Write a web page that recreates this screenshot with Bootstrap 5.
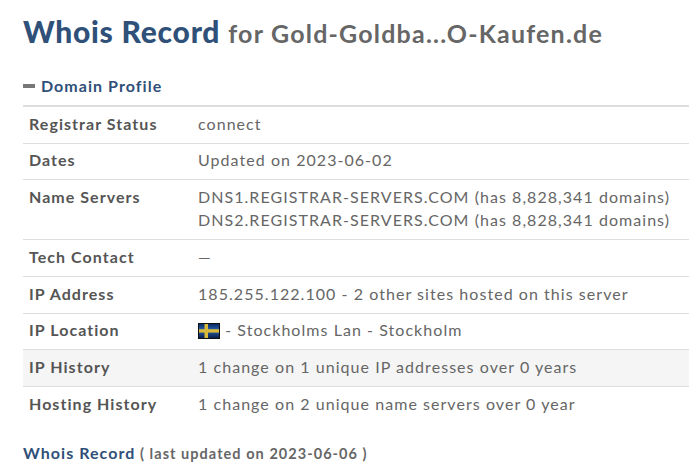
<!DOCTYPE html>
<html><head><meta charset="utf-8">
<link href="https://cdn.jsdelivr.net/npm/bootstrap@5.3.0/dist/css/bootstrap.min.css" rel="stylesheet">
<style>
html,body{background:#fff;overflow:hidden}
body{font-family:Lato,sans-serif;color:#666;padding:11px 0 0 23px;letter-spacing:1.05px;font-size:16px}
.ttl{font-size:30px;line-height:40px;font-weight:700;margin:0;letter-spacing:.75px;color:#666}
.ttl b{color:#2f5078}
.ttl span{font-size:25px;letter-spacing:1.2px}
.sect{margin-top:19px;color:#2f5078;font-weight:700;line-height:28px;gap:6px}
.dash{width:12px;height:4px;background:#777;display:block}
.infotab{width:666px;margin:5px 0 0;border-top:2px solid #ddd}
.infotab td{padding:4.6px 6px 7.92px;border-bottom:1px solid #ddd;line-height:23.2px;vertical-align:top;color:#666;box-shadow:none}
.infotab td:first-child{width:169px;font-weight:700;color:#555}
.infotab tr.shade td{background:#f5f5f5}
.infotab tr:last-child td{border-bottom:0}
.foot{margin-top:18px;font-weight:700;line-height:24px;font-size:14.5px}
.foot a{color:#2f5078;text-decoration:none;font-size:16px}
.foot span{color:#666}
.flag{vertical-align:-3px}
</style></head><body>
<h1 class="ttl"><b>Whois Record</b> <span>for Gold-Goldba...O-Kaufen.de</span></h1>
<div class="sect d-flex align-items-center"><i class="dash"></i>Domain Profile</div>
<table class="infotab table mb-0">
<tr><td>Registrar Status</td><td>connect</td></tr>
<tr><td>Dates</td><td>Updated on 2023-06-02</td></tr>
<tr><td>Name Servers</td><td>DNS1.REGISTRAR-SERVERS.COM (has 8,828,341 domains)<br>DNS2.REGISTRAR-SERVERS.COM (has 8,828,341 domains)</td></tr>
<tr><td>Tech Contact</td><td>—</td></tr>
<tr><td>IP Address</td><td>185.255.122.100 - 2 other sites hosted on this server</td></tr>
<tr><td>IP Location</td><td><svg class="flag" width="22" height="16" viewBox="0 0 22 16"><defs><linearGradient id="g" x1="0" y1="0" x2="0" y2="1"><stop offset="0" stop-color="#0a2c66"/><stop offset=".45" stop-color="#2e62b0"/><stop offset="1" stop-color="#071e4a"/></linearGradient></defs><rect width="22" height="16" fill="#111"/><rect x="1" y="1" width="20" height="14" fill="url(#g)"/><rect x="6.5" y="1" width="3.5" height="14" fill="#d8b93c"/><rect x="1" y="6.2" width="20" height="3.4" fill="#d8b93c"/></svg> - Stockholms Lan - Stockholm</td></tr>
<tr class="shade"><td>IP History</td><td>1 change on 1 unique IP addresses over 0 years</td></tr>
<tr><td>Hosting History</td><td>1 change on 2 unique name servers over 0 year</td></tr>
</table>
<div class="foot"><a href="#">Whois Record</a> <span>( last updated on 2023-06-06 )</span></div>
</body></html>
